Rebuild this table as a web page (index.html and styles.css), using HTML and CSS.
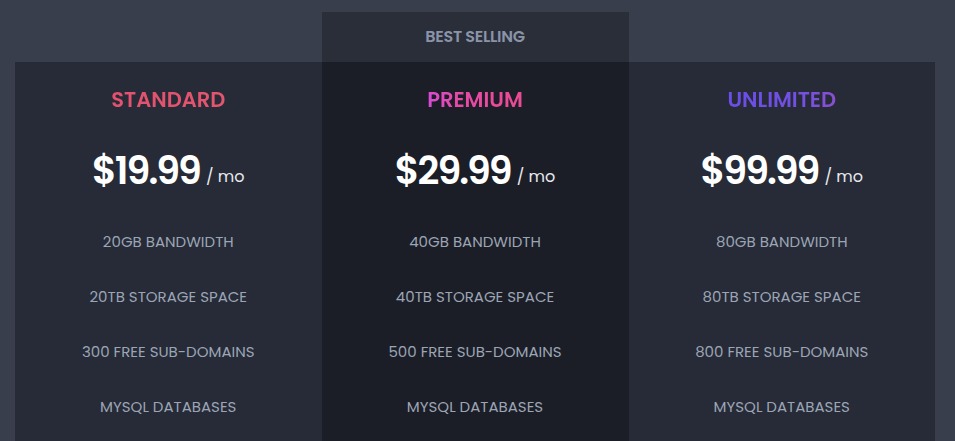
FILE: index.html
```html
<!DOCTYPE html>
<html>
<head>
<meta charset="utf-8">
<link rel="stylesheet" href="styles.css">
</head>
<body>
<div class="pricing">
  <div class="plan">
    <div class="card">
      <h2 class="title standard">STANDARD</h2>
      <div class="price"><span class="amount">$19.99</span><span class="per">/ mo</span></div>
      <ul class="features">
        <li>20GB BANDWIDTH</li>
        <li>20TB STORAGE SPACE</li>
        <li>300 FREE SUB-DOMAINS</li>
        <li>MYSQL DATABASES</li>
      </ul>
    </div>
  </div>
  <div class="plan featured">
    <div class="badge">BEST SELLING</div>
    <div class="card">
      <h2 class="title premium">PREMIUM</h2>
      <div class="price"><span class="amount">$29.99</span><span class="per">/ mo</span></div>
      <ul class="features">
        <li>40GB BANDWIDTH</li>
        <li>40TB STORAGE SPACE</li>
        <li>500 FREE SUB-DOMAINS</li>
        <li>MYSQL DATABASES</li>
      </ul>
    </div>
  </div>
  <div class="plan">
    <div class="card">
      <h2 class="title unlimited">UNLIMITED</h2>
      <div class="price"><span class="amount">$99.99</span><span class="per">/ mo</span></div>
      <ul class="features">
        <li>80GB BANDWIDTH</li>
        <li>80TB STORAGE SPACE</li>
        <li>800 FREE SUB-DOMAINS</li>
        <li>MYSQL DATABASES</li>
      </ul>
    </div>
  </div>
</div>
</body>
</html>
```

FILE: styles.css
```css
html, body {
  margin: 0;
  padding: 0;
  height: 100%;
  background: #393e4c;
  font-family: "Poppins", "Inter", "Noto Sans", sans-serif;
  overflow: hidden;
}
.pricing {
  display: flex;
  padding: 12px 20px 0 15px;
  height: 100%;
  box-sizing: border-box;
}
.plan {
  flex: 1;
  display: flex;
  flex-direction: column;
  padding-top: 50px;
}
.plan.featured {
  padding-top: 0;
  flex: 0 0 307px;
}
.badge {
  height: 50px;
  line-height: 50px;
  background: #2a2e39;
  color: #8a94a9;
  text-align: center;
  font-size: 16px;
  font-weight: 600;
  letter-spacing: -0.3px;
}
.card {
  flex: 1;
  background: #262b37;
  text-align: center;
  padding-top: 26px;
}
.featured .card {
  background: #1b1e27;
}
.title {
  margin: 0;
  font-size: 21px;
  line-height: 24px;
  font-weight: 600;
  display: inline-block;
  -webkit-background-clip: text;
  background-clip: text;
  color: transparent;
}
.standard { background-image: linear-gradient(90deg, #e3516f, #e2566e); }
.premium { background-image: linear-gradient(90deg, #d84bd8, #e64aa8 30%, #ea4b93); }
.unlimited { background-image: linear-gradient(90deg, #6a4ee6, #7450e2 70%, #8a4fcf); }
.price {
  margin-top: 33px;
  height: 48px;
  line-height: 48px;
  color: #ffffff;
}
.amount {
  font-size: 38px;
  font-weight: 600;
  letter-spacing: -2px;
}
.per {
  font-size: 16px;
  margin-left: 6px;
  color: #e8e9ee;
  vertical-align: 2px;
}
.features {
  list-style: none;
  margin: 19px 0 0;
  padding: 0;
}
.features li {
  height: 55px;
  line-height: 55px;
  font-size: 15px;
  color: #9ca5b5;
}
```
